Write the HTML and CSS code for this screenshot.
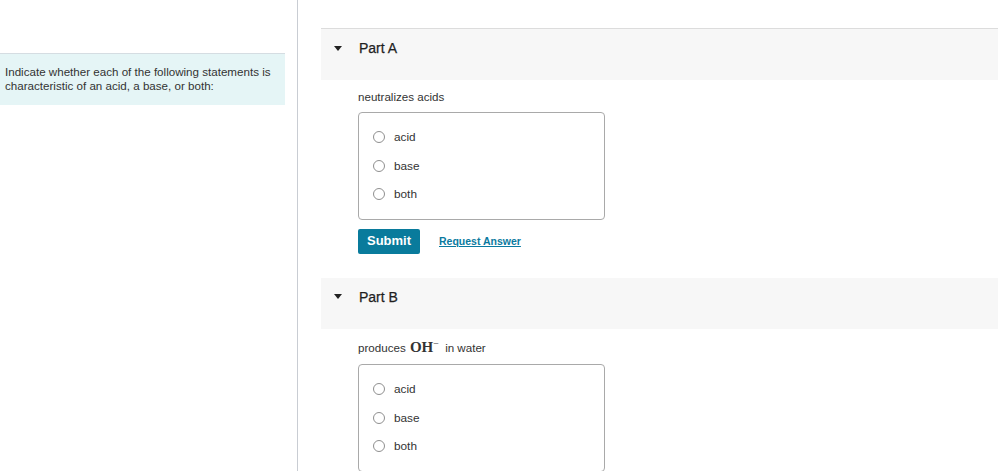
FILE: index.html
```html
<!DOCTYPE html>
<html>
<head>
<meta charset="utf-8">
<link rel="stylesheet" href="styles.css">
</head>
<body>
<div class="page">
  <aside class="side">
    <div class="intro">Indicate whether each of the following statements is characteristic of an acid, a base, or both:</div>
  </aside>
  <main class="main">
    <section class="part part-a">
      <div class="part-header"><span class="caret"></span><span class="part-title">Part A</span></div>
      <div class="part-body">
        <div class="prompt">neutralizes acids</div>
        <div class="choices">
          <label class="choice"><span class="radio"></span><span>acid</span></label>
          <label class="choice"><span class="radio"></span><span>base</span></label>
          <label class="choice"><span class="radio"></span><span>both</span></label>
        </div>
        <div class="actions">
          <button class="submit">Submit</button>
          <a class="request">Request Answer</a>
        </div>
      </div>
    </section>
    <section class="part part-b">
      <div class="part-header"><span class="caret"></span><span class="part-title">Part B</span></div>
      <div class="part-body">
        <div class="prompt prompt-math">produces <span class="math">OH<sup>−</sup></span> in water</div>
        <div class="choices">
          <label class="choice"><span class="radio"></span><span>acid</span></label>
          <label class="choice"><span class="radio"></span><span>base</span></label>
          <label class="choice"><span class="radio"></span><span>both</span></label>
        </div>
      </div>
    </section>
  </main>
</div>
</body>
</html>
```
FILE: styles.css
```css
html, body {
  margin: 0;
  padding: 0;
  background: #fff;
}
body {
  font-family: "Liberation Sans", Arial, sans-serif;
  color: #333;
  height: 471px;
  overflow: hidden;
}
.page {
  display: flex;
  height: 471px;
}
.side {
  width: 297px;
  flex: none;
  border-right: 1px solid #c9cdd3;
}
.intro {
  margin-top: 53px;
  width: 280px;
  background: #e5f5f6;
  border-top: 1px solid #d5dde2;
  padding: 11px 0 12px 5px;
  font-size: 11.6px;
  line-height: 14px;
  color: #333;
}
.main {
  flex: 1;
  padding: 28px 2px 0 23px;
}
.part-header {
  display: flex;
  align-items: center;
  height: 51px;
  padding-bottom: 13px;
  box-sizing: border-box;
  background: #f7f7f7;
}
.part-a .part-header {
  height: 52px;
  border-top: 1px solid #dcdcdc;
}
.part-b {
  margin-top: 24px;
}
.caret {
  width: 0;
  height: 0;
  margin-left: 13px;
  border-left: 4.5px solid transparent;
  border-right: 4.5px solid transparent;
  border-top: 5px solid #222;
}
.part-title {
  margin-left: 17px;
  font-size: 14px;
  line-height: 16px;
  color: #1f1f1f;
  -webkit-text-stroke: 0.25px #1f1f1f;
}
.part-body {
  padding: 9px 0 0 37px;
}
.prompt {
  font-size: 11.6px;
  line-height: 16px;
  color: #333;
  margin-bottom: 7px;
}
.prompt-math {
  line-height: 20px;
  margin-bottom: 6px;
  margin-top: -1px;
}
.math {
  font-family: "Liberation Serif", "Times New Roman", serif;
  font-size: 15px;
  font-weight: bold;
  color: #333;
  margin: 0 3px 0 1px;
}
.math sup {
  font-size: 10px;
  font-weight: normal;
  vertical-align: 5px;
  line-height: 0;
}
.choices {
  width: 245px;
  border: 1px solid #a9a9a9;
  border-radius: 4px;
  padding: 10px 0 10px 0;
}
.part-b .choices {
  padding-top: 10.5px;
}
.choice {
  display: flex;
  align-items: center;
  height: 28.5px;
  padding-left: 14px;
  font-size: 11.8px;
  color: #333;
}
.radio {
  width: 10px;
  height: 10px;
  border: 1px solid #8f8f8f;
  border-radius: 50%;
  margin-right: 9px;
  background: #fff;
}
.actions {
  display: flex;
  align-items: center;
  margin-top: 9px;
}
.submit {
  width: 62px;
  height: 25px;
  border: none;
  border-radius: 2px;
  background: #097b9c;
  color: #fff;
  font-family: "Liberation Sans", Arial, sans-serif;
  font-size: 13px;
  font-weight: bold;
  padding: 0;
  padding-bottom: 2px;
}
.request {
  margin-left: 19px;
  font-size: 10.5px;
  font-weight: bold;
  color: #0b7aa0;
  text-decoration: underline;
}
```
